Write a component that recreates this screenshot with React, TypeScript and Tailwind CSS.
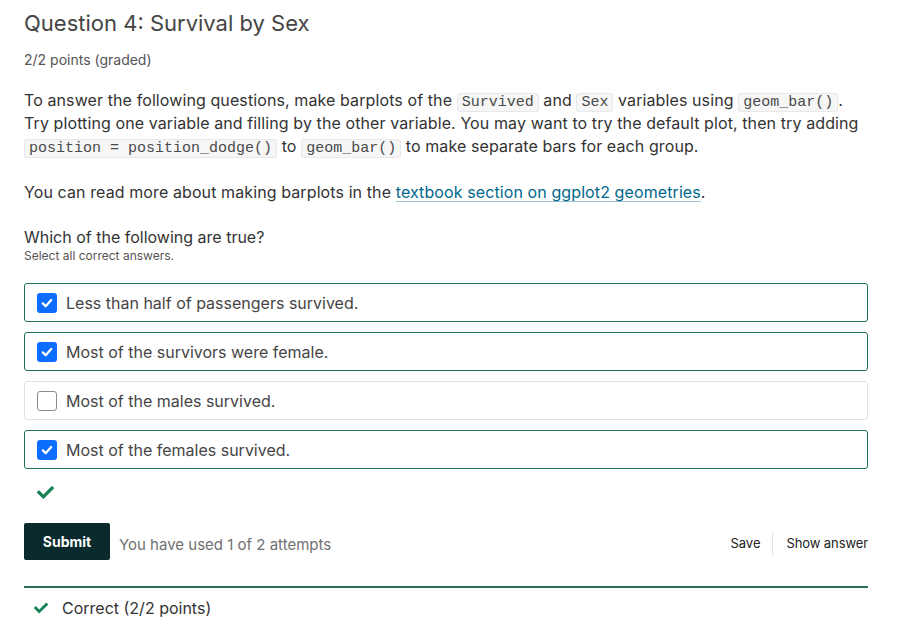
import React from "react";
import { FaCheck } from "react-icons/fa";

const Code = ({ children }: { children: React.ReactNode }) => (
  <code className="font-['Liberation_Mono',monospace] text-[15px] leading-[16px] tracking-normal bg-[#f6f6f6] border border-[#e8e8e8] rounded-[3px] px-[4px] py-0 text-[#4a4a4a]">
    {children}
  </code>
);

const Box = ({ checked }: { checked: boolean }) =>
  checked ? (
    <span className="w-[20px] h-[20px] rounded-[3px] bg-[#0d6efd] flex items-center justify-center shrink-0">
      <svg width="14" height="14" viewBox="0 0 16 16">
        <path d="M3.2 8.4 L6.5 11.6 L12.8 4.6" fill="none" stroke="white" strokeWidth="2.6" strokeLinecap="round" strokeLinejoin="round" />
      </svg>
    </span>
  ) : (
    <span className="w-[20px] h-[20px] rounded-[3px] border border-[#8a8a8a] bg-white shrink-0" />
  );

const options = [
  { t: "Less than half of passengers survived.", c: true },
  { t: "Most of the survivors were female.", c: true },
  { t: "Most of the males survived.", c: false },
  { t: "Most of the females survived.", c: true },
];

export default function App() {
  return (
    <div className="w-[910px] h-[637px] bg-white font-['Inter',sans-serif] text-[#333] overflow-hidden">
      <div className="pl-[24px] pr-[42px] pt-[9px]">
        <h2 className="text-[22px] leading-[28px] text-[#454545] font-normal">Question 4: Survival by Sex</h2>
        <div className="text-[14px] leading-[20px] text-[#555] mt-[13px]">2/2 points (graded)</div>
        <div className="text-[16px] leading-[23px] text-[#333] mt-[19px] tracking-[0.1px]">
          <p>
            To answer the following questions, make barplots of the <Code>Survived</Code> and <Code>Sex</Code> variables using <Code>geom_bar()</Code>. Try plotting one variable and filling by the other variable. You may want to try the default plot, then try adding <Code>position = position_dodge()</Code> to <Code>geom_bar()</Code> to make separate bars for each group.
          </p>
          <p className="mt-[23px]">
            You can read more about making barplots in the{" "}
            <a className="text-[#00688d] underline decoration-[#9ec3d2] underline-offset-[3px]">textbook section on ggplot2 geometries</a>.
          </p>
        </div>
        <div className="mt-[22px] text-[16px] leading-[22px] text-[#333]">Which of the following are true?</div>
        <div className="text-[12px] leading-[16px] text-[#555]">Select all correct answers.</div>
        <div className="mt-[19px] flex flex-col gap-[10px]">
          {options.map((o) => (
            <div
              key={o.t}
              className={
                "h-[39px] rounded-[3px] border flex items-center gap-[9px] pl-[12px] text-[16px] text-[#454545] " +
                (o.c ? "border-[#1f6f58]" : "border-[#e2e2e2]")
              }
            >
              <Box checked={o.c} />
              <span>{o.t}</span>
            </div>
          ))}
        </div>
        <div className="mt-[15px] pl-[13px] h-[16px] flex items-center">
          <FaCheck className="text-[#178253] w-[17px] h-[17px]" />
        </div>
        <div className="mt-[23px] flex items-center">
          <button className="h-[37px] w-[86px] bg-[#0a2a2e] text-white text-[14px] font-bold rounded-[2px]">Submit</button>
          <span className="ml-[9px] text-[15px] text-[#707070] mt-[8px]">You have used 1 of 2 attempts</span>
          <div className="ml-auto flex items-center text-[13px] text-[#222] mt-[4px]">
            <span className="pr-[12px]">Save</span>
            <span className="w-px h-[22px] bg-[#e0e0e0]" />
            <span className="pl-[13px] tracking-[-0.1px]">Show answer</span>
          </div>
        </div>
        <div className="mt-[26px] border-t-2 border-[#2b6f59]" />
        <div className="mt-[8px] flex items-center gap-[14px] pl-[10px] text-[16px] text-[#333]">
          <FaCheck className="text-[#178253] w-[14px] h-[14px]" />
          <span>Correct (2/2 points)</span>
        </div>
      </div>
    </div>
  );
}
